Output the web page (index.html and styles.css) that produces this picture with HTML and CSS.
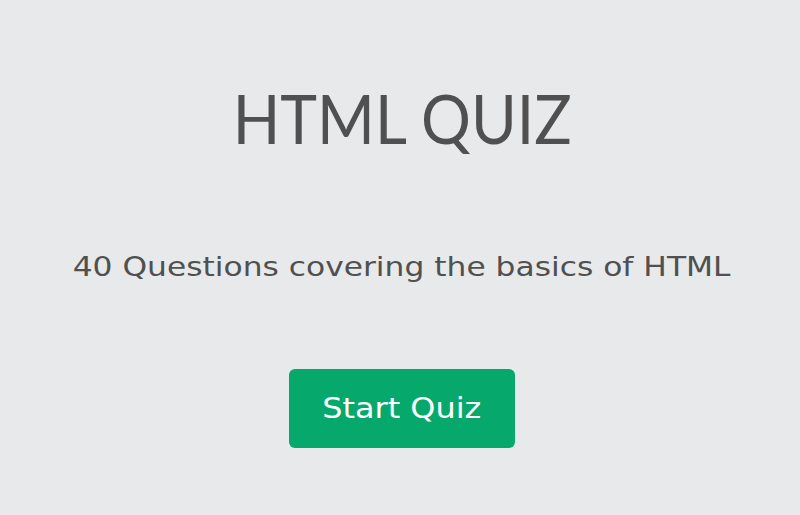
FILE: index.html
```html
<!DOCTYPE html>
<html>
<head>
<meta charset="utf-8">
<link rel="stylesheet" href="styles.css">
</head>
<body>
<main class="start">
  <h1 class="title"><span class="title-text">HTML QUIZ</span></h1>
  <p class="subtitle"><span class="subtitle-text">40 Questions covering the basics of HTML</span></p>
  <button class="start-btn"><span class="btn-text">Start Quiz</span></button>
</main>
</body>
</html>
```

FILE: styles.css
```css
html, body {
  margin: 0;
  padding: 0;
  background: #e8e9eb;
  height: 100%;
}
.start {
  display: flex;
  flex-direction: column;
  align-items: center;
  padding: 80px 0 0 4px;
}
.title {
  margin: 0;
  font-family: Lato, sans-serif;
  font-weight: 400;
  font-size: 67px;
  line-height: 76px;
  color: #505050;
}
.title-text {
  display: inline-block;
  transform: scaleX(0.93);
}
.subtitle {
  margin: 95px 0 0;
  font-family: "DejaVu Sans", Verdana, sans-serif;
  font-size: 27px;
  line-height: 32px;
  color: #505050;
}
.subtitle-text {
  display: inline-block;
  transform: scaleX(1.16);
}
.start-btn {
  margin-top: 86px;
  width: 226px;
  height: 79px;
  border: none;
  border-radius: 6px;
  background: #06a86b;
  color: #fff;
  font-family: "DejaVu Sans", Verdana, sans-serif;
  font-size: 28px;
}
.btn-text {
  display: inline-block;
  transform: scaleX(1.14);
}
```
